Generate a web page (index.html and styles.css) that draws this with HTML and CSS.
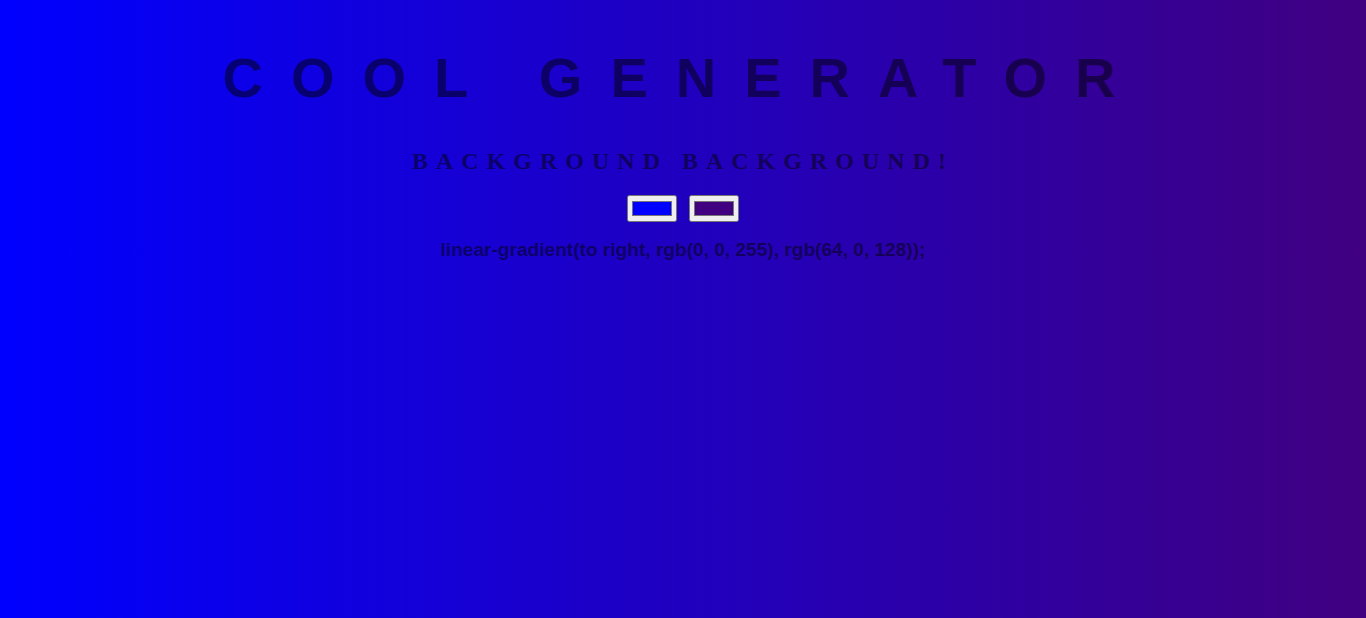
FILE: index.html
```html
<!DOCTYPE html>
<html>
<head>
<meta charset="utf-8">
<title>Cool Generator</title>
<link rel="stylesheet" href="styles.css">
</head>
<body class="page">
  <h1 class="title">Cool Generator</h1>
  <h2 class="subtitle">Background Background!</h2>
  <div class="pickers">
    <input class="picker" type="color" value="#0000ff">
    <input class="picker" type="color" value="#400080">
  </div>
  <h3 class="css-output">linear-gradient(to right, rgb(0, 0, 255), rgb(64, 0, 128));</h3>
</body>
</html>
```
FILE: styles.css
```css
html {
  min-height: 100%;
}
.page {
  margin: 0;
  min-height: 100vh;
  background: linear-gradient(to right, rgb(0, 0, 255), rgb(64, 0, 128));
  font-family: "Liberation Sans", Arial, sans-serif;
  color: rgba(0, 0, 0, 0.5);
  text-align: center;
  padding-top: 1px;
}
.title {
  font-family: "Liberation Sans", Arial, sans-serif;
  font-weight: bold;
  font-size: 56px;
  letter-spacing: 28px;
  text-transform: uppercase;
  margin: 41px 0 0 0;
  line-height: 72px;
}
.subtitle {
  font-family: "Liberation Serif", "Times New Roman", serif;
  font-weight: bold;
  font-size: 24px;
  letter-spacing: 8px;
  text-transform: uppercase;
  margin: 33px 0 0 0;
  line-height: 28px;
}
.pickers {
  margin-top: 20px;
  display: flex;
  justify-content: center;
  gap: 12px;
}
.picker {
  margin: 0;
}
.css-output {
  font-size: 19.1px;
  font-weight: bold;
  margin: 17px 0 0 0;
  line-height: 22px;
}
```
